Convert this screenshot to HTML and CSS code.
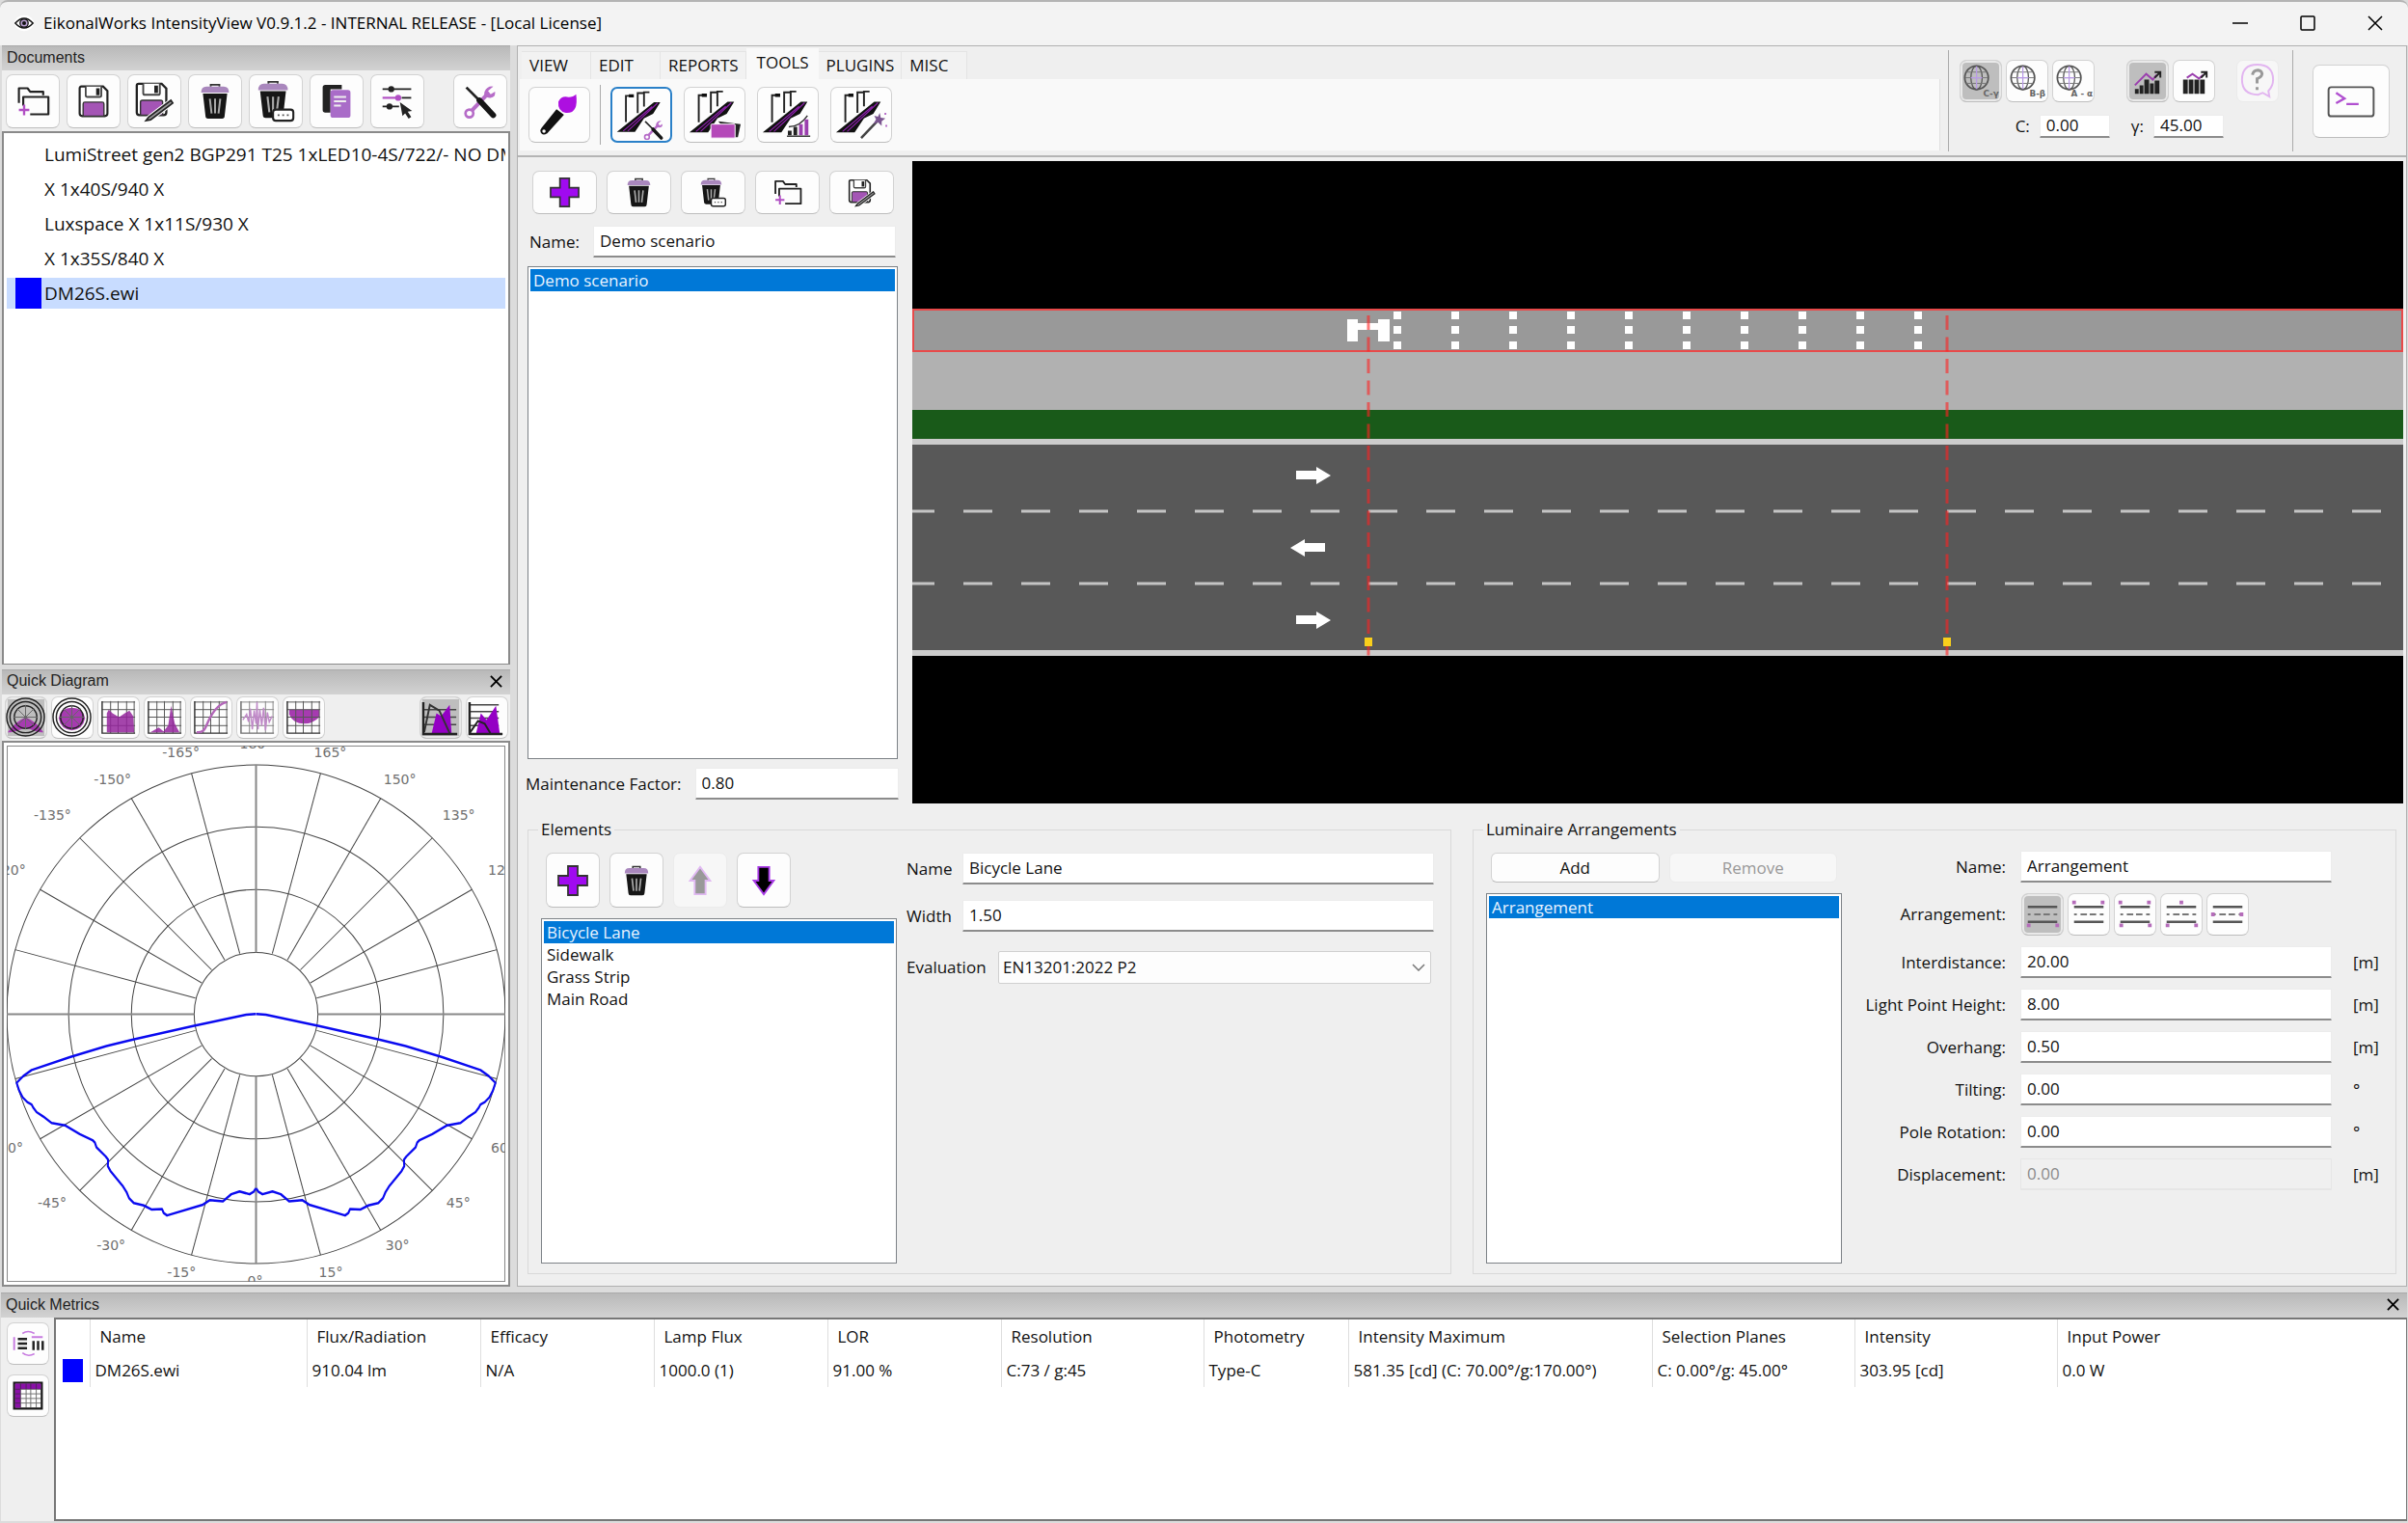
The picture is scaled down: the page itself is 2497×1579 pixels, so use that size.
FILE: index.html
```html
<!DOCTYPE html>
<html lang="en">
<head>
<meta charset="utf-8">
<title>EikonalWorks IntensityView</title>
<link rel="stylesheet" href="styles.css">
</head>
<body>
<svg class="sprite" aria-hidden="true">
  <symbol id="i-eye" viewBox="0 0 24 20"><ellipse cx="12" cy="10" rx="11" ry="9" fill="#fff"/><path d="M2 10Q12-1 22 10Q12 21 2 10Z" fill="none" stroke="#111" stroke-width="1.6"/><circle cx="12" cy="10" r="4.6" fill="#b9a0d0" stroke="#111" stroke-width="1.4"/><circle cx="12" cy="10" r="2.2" fill="#111"/></symbol>
  <symbol id="i-folder" viewBox="0 0 40 40"><path d="M4 22V5H14L17 9H32V13M9 25V15H38V35H17" fill="none" stroke="#222" stroke-width="2.4" stroke-linejoin="round"/><path d="M10 24V36M4 30H16" stroke="#b14fc4" stroke-width="2.6"/></symbol>
  <symbol id="i-save" viewBox="0 0 40 40"><path d="M6 3H31L36 8V34Q36 37 33 37H7Q4 37 4 34V5Q4 3 6 3Z" fill="#fff" stroke="#222" stroke-width="2.4"/><path d="M11 3V13Q11 15 13 15H27Q29 15 29 13V3" fill="#fff" stroke="#444" stroke-width="2"/><rect x="23" y="5" width="4" height="8" fill="#222"/><path d="M8 37V23Q8 21 10 21H30Q32 21 32 23V37Z" fill="#a455b5" stroke="#333" stroke-width="1.5"/></symbol>
  <symbol id="i-saveas" viewBox="0 0 46 44"><use href="#i-save" width="40" height="40"/><path d="M41 21L17 39L14 43L19 42L43 24Z" fill="#999" stroke="#fff" stroke-width="4"/><path d="M41 21L17 39L14 43L19 42L43 24Z" fill="#999" stroke="#222" stroke-width="1.8"/></symbol>
  <symbol id="i-trash" viewBox="0 0 40 42"><path d="M15 4V2H25V4" fill="none" stroke="#333" stroke-width="2"/><path d="M4 11Q4 4 10 4H30Q36 4 36 11Z" fill="#a987bd"/><path d="M6 12H34L31 38Q31 41 28 41H12Q9 41 9 38Z" fill="#161616"/><path d="M14 18L16 35M20 18V35M26 18L24 35" stroke="#aaa" stroke-width="2.2"/></symbol>
  <symbol id="i-trashmore" viewBox="0 0 46 46"><use href="#i-trash" width="40" height="42"/><rect x="20" y="32" width="22" height="12" rx="3" fill="#fff" stroke="#222" stroke-width="2.2"/><path d="M25 38H38" stroke="#555" stroke-width="2" stroke-dasharray="2 3"/></symbol>
  <symbol id="i-copy" viewBox="0 0 40 40"><path d="M7 1H26V6H13V33H7Q4 33 4 30V4Q4 1 7 1Z" fill="#222"/><rect x="13" y="7" width="23" height="32" rx="3" fill="#a96cc8"/><path d="M17 15H31M17 20H31M17 25H25" stroke="#eee" stroke-width="2"/></symbol>
  <symbol id="i-sliders" viewBox="0 0 40 40"><path d="M3 6H36M3 26H22" stroke="#222" stroke-width="2"/><path d="M3 16H22" stroke="#b14fc4" stroke-width="2.4"/><path d="M25 16H36" stroke="#222" stroke-width="2"/><circle cx="13" cy="6" r="3.5" fill="#222"/><circle cx="21" cy="16" r="3.5" fill="#b14fc4"/><circle cx="11" cy="26" r="3.5" fill="#222"/><path d="M23 21L37 31L32 32L36 38L33 40L29 34L26 37Z" fill="#222"/></symbol>
  <symbol id="i-tools" viewBox="0 0 40 40"><path d="M9 32L29 11" stroke="#b66cc8" stroke-width="4.5"/><circle cx="7.500" cy="34" r="4.500" fill="#fff" stroke="#b66cc8" stroke-width="3"/><path d="M35 3L29 8L32 12L37 9Q38 16 31 16Q23 16 25 9Q28 2 35 3Z" fill="#b66cc8"/><path d="M4 4L20 20" stroke="#222" stroke-width="3"/><path d="M19 19L35 36" stroke="#161616" stroke-width="6.500" stroke-linecap="round"/></symbol>
  <symbol id="i-brush" viewBox="0 0 64 58"><path d="M50 7Q53 28 39 27Q30 25 31 15Q34 8 42 10Q47 10 50 7Z" fill="#ad0fe0"/><path d="M29 23L37 29L19 49Q14 52 12 48Q11 45 13 43Z" fill="#111"/><circle cx="15.500" cy="46.500" r="1.800" fill="#fff"/></symbol>
  <symbol id="i-street" viewBox="0 0 64 58"><path d="M15 37V8H22M28 27V5H35M35 20V4H41" fill="none" stroke="#222" stroke-width="2"/><path d="M19 7H23V9H19Z" stroke="#111" stroke-width="1.500"/><path d="M5 48L46 15H53L45 28L35 33L25 48Z" fill="#111"/><path d="M17 47L50 16M12 47L44 20" stroke="#8a1fa8" stroke-width="1.300"/></symbol>
  <symbol id="i-sttools" viewBox="0 0 64 58"><use href="#i-street"/><use href="#i-tools" x="34" y="34" width="23" height="23"/></symbol>
  <symbol id="i-stcards" viewBox="0 0 64 58"><use href="#i-street"/><path d="M36 36L60 39L57 53H50Z" fill="#222"/><rect x="28" y="39" width="26" height="15" rx="1" fill="#b548b9" stroke="#fff"/></symbol>
  <symbol id="i-stchart" viewBox="0 0 64 58"><use href="#i-street"/><path d="M33 42Q45 42 53 30" fill="none" stroke="#333" stroke-width="1.500"/><path d="M32 46H36V51H32ZM38 42H42V51H38Z" fill="#222"/><path d="M44 39H48V51H44ZM50 34H54V51H50Z" fill="#9b3fae"/><path d="M31 52H56" stroke="#333" stroke-width="1.500"/></symbol>
  <symbol id="i-stwand" viewBox="0 0 64 58"><use href="#i-street"/><path d="M32 55L50 35" stroke="#fff" stroke-width="5"/><path d="M32 54L50 35" stroke="#444" stroke-width="2.600"/><path d="M52 27L53 32L58 33L54 36L54 41L50 37L45 39L48 34L46 30L50 31Z" fill="#7b5590"/><path d="M57 28H59M58 41H60" stroke="#b66cc8" stroke-width="2"/></symbol>
  <symbol id="i-plus" viewBox="0 0 32 32"><path d="M11 1H21V11H31V21H21V31H11V21H1V11H11Z" fill="#a00af0" stroke="#333" stroke-width="1.800"/></symbol>
  <symbol id="i-down" viewBox="0 0 26 34"><path d="M7 2H19V17H24L13 32L2 17H7Z" fill="#000" stroke="#a93be6" stroke-width="2"/></symbol>
  <symbol id="i-up" viewBox="0 0 26 34"><path d="M7 32H19V17H24L13 2L2 17H7Z" fill="#999" stroke="#e0b8f2" stroke-width="2"/></symbol>
  <symbol id="i-globe" viewBox="0 0 43 43"><g fill="none" stroke="#555" stroke-width="1.300"><circle cx="17" cy="18" r="12.500" stroke-width="1.800"/><ellipse cx="17" cy="18" rx="6" ry="12.500"/><path d="M6 12H28M5 18H29M6 24H28" stroke="#777" stroke-width="1"/><path d="M17 6V30M11 18H23" stroke="#b99be6"/></g></symbol>
  <symbol id="i-bars" viewBox="0 0 43 43"><path d="M8 30H12V35H8ZM13 26H17V35H13ZM18 20H23V35H18ZM24 24H28V35H24ZM29 21H34V35H29Z" fill="#222"/><path d="M8 26L20 14L27 20L31 15" fill="none" stroke="#9b3fae" stroke-width="2"/><path d="M29 18L34 13M29 12H35V18" fill="none" stroke="#222" stroke-width="2"/></symbol>
  <symbol id="i-bars2" viewBox="0 0 43 43"><path d="M10 20H15V35H10ZM16 20H21V35H16ZM22 20H27V35H22ZM28 20H33V35H28Z" fill="#222"/><path d="M14 18L20 14L27 19L31 15" fill="none" stroke="#9b3fae" stroke-width="2"/><path d="M29 18L34 13M29 12H35V18" fill="none" stroke="#222" stroke-width="2"/></symbol>
  <symbol id="i-help" viewBox="0 0 43 43"><path d="M33 32Q38 27 38 20Q38 4 21 4Q5 4 5 20Q5 36 22 36L27 34L34 38Z" fill="none" stroke="#e2b5f0" stroke-width="2"/><path d="M16 15Q17 10 22 10Q27 11 26 15Q25 18 21 19V24M21 28V31" fill="none" stroke="#999" stroke-width="3"/></symbol>
  <symbol id="i-term" viewBox="0 0 80 76"><rect x="16" y="23" width="48" height="31" rx="3" fill="none" stroke="#555" stroke-width="2"/><path d="M24 29L33 35L24 40M35 41H48" fill="none" stroke="#b04fd0" stroke-width="2.400"/></symbol>
  <symbol id="g-axes" viewBox="0 0 43 43"><path d="M4 5H39M4 13H39M4 21H39M4 30H39M13 4V38M21 4V38M30 4V38M38 4V38" stroke="#555"/><path d="M4 4V38H39" fill="none" stroke="#333" stroke-width="1.500"/></symbol>
  <symbol id="g-rings" viewBox="0 0 43 43"><g fill="none" stroke="#222" stroke-width="1.500"><circle cx="21" cy="21" r="20"/><circle cx="21" cy="21" r="16.500"/><circle cx="21" cy="21" r="12"/></g><path d="M21 8V34M8 21H34M12 12L30 30M30 12L12 30" stroke="#666"/></symbol>
  <symbol id="i-d1" viewBox="0 0 43 43"><path d="M2 2H41V41H2Z" fill="#bebebe"/><path d="M2 37Q10 26 21 21Q33 26 40 37Q35 38 21 32Q8 38 2 37Z" fill="#a63bb0"/><use href="#g-rings"/></symbol>
  <symbol id="i-d2" viewBox="0 0 43 43"><path d="M21 11Q33 11 35 22Q33 34 21 35Q9 34 7 22Q9 11 21 11Z" fill="#a63bb0"/><use href="#g-rings"/></symbol>
  <symbol id="i-d3" viewBox="0 0 43 43"><use href="#g-axes"/><path d="M9 37V17L11 13L15 17L22 21L28 17L33 14L37 20L38 37Z" fill="#94249c" opacity=".85"/></symbol>
  <symbol id="i-d4" viewBox="0 0 43 43"><use href="#g-axes"/><path d="M6 37L15 32L20 36L25 30L28 9L32 28L37 37Z" fill="#94249c" opacity=".85"/></symbol>
  <symbol id="i-d5" viewBox="0 0 43 43"><use href="#g-axes"/><path d="M6 37Q13 38 16 31Q25 8 38 5" fill="none" stroke="#b266b8" stroke-width="2.500"/></symbol>
  <symbol id="i-d6" viewBox="0 0 43 43"><use href="#g-axes" opacity=".7"/><path d="M6 24L10 18L12 26L14 12L16 34L18 14L20 28L21 5L22 34L24 13L26 30L28 11L30 35L32 16L34 26L37 20" fill="none" stroke="#c08ac8" stroke-width="1.500"/></symbol>
  <symbol id="i-d7" viewBox="0 0 43 43"><path d="M6 13H38V21Q31 28 22 28Q10 28 6 18Z" fill="#a63bb0"/><use href="#g-axes"/></symbol>
  <symbol id="i-d8" viewBox="0 0 43 43"><path d="M2 2H41V41H2Z" fill="#bebebe"/><path d="M3 13H38M3 21H38M3 29H38" stroke="#444" stroke-width="1.500"/><path d="M12 38L17 17L22 20L31 8L33 38Z" fill="#9400c4"/><path d="M4 37L10 8L20 14L31 38" fill="none" stroke="#333" stroke-width="2"/><path d="M3 5V39H39" fill="none" stroke="#222" stroke-width="2.500"/></symbol>
  <symbol id="i-d9" viewBox="0 0 43 43"><path d="M3 8H34M3 15H34M3 22H34M3 30H34" stroke="#444" stroke-width="1.500"/><path d="M10 38L15 17L21 24L31 9L35 38Z" fill="#9400c4"/><path d="M3 38L12 25L19 28L25 38" fill="none" stroke="#222" stroke-width="2"/><path d="M3 5V39H38" fill="none" stroke="#222" stroke-width="2.500"/></symbol>
  <symbol id="i-swap" viewBox="0 0 44 44"><path d="M11 17H21M11 22H21M11 27H21M28 19V29M33 19V29M38 19V29" stroke="#222" stroke-width="2.600"/><path d="M7 15V29M26 15H38" stroke="#c77be0" stroke-width="2"/><path d="M16 11Q22 7 29 11M29 33Q22 37 16 32" fill="none" stroke="#c77be0" stroke-width="1.600"/></symbol>
  <symbol id="i-grid" viewBox="0 0 44 44"><path d="M7 8H37V36H7Z" fill="#fff" stroke="#1a1a1a" stroke-width="2.400"/><path d="M8 9H36V15H14V35H8Z" fill="#8a0fa8"/><path d="M14 9V35M20 9V35M25 9V35M31 9V35M8 15H36M8 20H36M8 25H36M8 30H36" stroke="#333" stroke-width="1" opacity=".7"/></symbol>
  <symbol id="g-road" viewBox="0 0 44 44"><path d="M6 14H38M6 30H38" stroke="#555" stroke-width="2.600"/><path d="M6 22H38" stroke="#777" stroke-width="2" stroke-dasharray="3 4 7 3 7 4 4"/></symbol>
</svg>

<header class="titlebar">
  <svg class="app-icon"><use href="#i-eye"/></svg>
  <h1 class="app-title">EikonalWorks IntensityView V0.9.1.2 - INTERNAL RELEASE - [Local License]</h1>
  <div class="window-buttons">
    <button aria-label="Minimize"><svg viewBox="0 0 16 16"><path d="M0 8H16"/></svg></button>
    <button aria-label="Maximize"><svg viewBox="0 0 16 16"><rect x="1" y="1" width="14" height="14" rx="1"/></svg></button>
    <button aria-label="Close"><svg viewBox="0 0 16 16"><path d="M1 1L15 15M15 1L1 15"/></svg></button>
  </div>
</header>

<main class="workspace">
  <aside class="sidebar">
    <section class="dock documents">
      <h2 class="dock-title">Documents</h2>
      <div class="doc-tools">
        <button class="tool doc" aria-label="Open"><svg><use href="#i-folder"/></svg></button>
        <button class="tool doc" aria-label="Save"><svg><use href="#i-save"/></svg></button>
        <button class="tool doc" aria-label="Save as"><svg class="wide"><use href="#i-saveas"/></svg></button>
        <button class="tool doc" aria-label="Delete"><svg><use href="#i-trash"/></svg></button>
        <button class="tool doc" aria-label="Delete more"><svg class="wide"><use href="#i-trashmore"/></svg></button>
        <button class="tool doc" aria-label="Copy"><svg><use href="#i-copy"/></svg></button>
        <button class="tool doc" aria-label="Select properties"><svg><use href="#i-sliders"/></svg></button>
        <button class="tool doc last" aria-label="Settings"><svg><use href="#i-tools"/></svg></button>
      </div>
      <ul class="doc-list">
        <li>LumiStreet gen2 BGP291 T25 1xLED10-4S/722/- NO DMX</li>
        <li>X 1x40S/940 X</li>
        <li>Luxspace X 1x11S/930 X</li>
        <li>X 1x35S/840 X</li>
        <li class="current">DM26S.ewi</li>
      </ul>
    </section>

    <section class="dock">
      <h2 class="dock-title">Quick Diagram <button class="dock-close" aria-label="Close diagram"><svg viewBox="0 0 14 14"><path d="M1 1L13 13M13 1L1 13"/></svg></button></h2>
      <div class="diagram-tools">
        <button class="tool small" aria-label="Polar diagram" aria-pressed="true"><svg><use href="#i-d1"/></svg></button>
        <button class="tool small" aria-label="Cone diagram"><svg><use href="#i-d2"/></svg></button>
        <button class="tool small" aria-label="Linear diagram"><svg><use href="#i-d3"/></svg></button>
        <button class="tool small" aria-label="Peak diagram"><svg><use href="#i-d4"/></svg></button>
        <button class="tool small" aria-label="Cumulative diagram"><svg><use href="#i-d5"/></svg></button>
        <button class="tool small" aria-label="Noise diagram"><svg><use href="#i-d6"/></svg></button>
        <button class="tool small" aria-label="Area diagram"><svg><use href="#i-d7"/></svg></button>
        <button class="tool small last" aria-label="Normalised" aria-pressed="true"><svg><use href="#i-d8"/></svg></button>
        <button class="tool small" aria-label="Absolute"><svg><use href="#i-d9"/></svg></button>
      </div>
      <div class="diagram-box">
        <svg class="polar" viewBox="0 0 516 555" role="img" aria-label="Polar intensity diagram">
          <defs>
            <line id="spoke" x1="258" y1="343" x2="258" y2="536"/>
            <path id="half" d="M769 882L740 884L580 912L400 946L320 962L210 990L95 1022L70 1037L50 1054L58 1074L68 1090L82 1102L95 1108L100 1116L110 1127L130 1138L155 1154L195 1160L240 1182L278 1197L285 1203L290 1215L318 1238L325 1246L324 1262L332 1274L370 1313L380 1326L388 1342L402 1354L432 1360L455 1370L487 1369L492 1379L502 1385L610 1358L630 1347L670 1350L695 1332L720 1325L750 1332L762 1326L769 1317"/>
          </defs>
          <rect class="frame" x="0" y="0" width="516" height="555"/>
          <g class="rings"><circle cx="258" cy="278" r="64"/><circle cx="258" cy="278" r="129"/><circle cx="258" cy="278" r="194"/><circle cx="258" cy="278" r="258"/></g>
          <g class="axis"><path d="M258 20V214M258 342V536M0 278H194M322 278H516"/></g>
          <g class="rings">
            <use href="#spoke" transform="rotate(15 258 278)"/><use href="#spoke" transform="rotate(30 258 278)"/><use href="#spoke" transform="rotate(45 258 278)"/><use href="#spoke" transform="rotate(60 258 278)"/><use href="#spoke" transform="rotate(75 258 278)"/>
            <use href="#spoke" transform="rotate(105 258 278)"/><use href="#spoke" transform="rotate(120 258 278)"/><use href="#spoke" transform="rotate(135 258 278)"/><use href="#spoke" transform="rotate(150 258 278)"/><use href="#spoke" transform="rotate(165 258 278)"/>
            <use href="#spoke" transform="rotate(195 258 278)"/><use href="#spoke" transform="rotate(210 258 278)"/><use href="#spoke" transform="rotate(225 258 278)"/><use href="#spoke" transform="rotate(240 258 278)"/><use href="#spoke" transform="rotate(255 258 278)"/>
            <use href="#spoke" transform="rotate(285 258 278)"/><use href="#spoke" transform="rotate(300 258 278)"/><use href="#spoke" transform="rotate(315 258 278)"/><use href="#spoke" transform="rotate(330 258 278)"/><use href="#spoke" transform="rotate(345 258 278)"/>
          </g>
          <g class="ticks">
            <text x="241" y="3">180°</text><text x="161" y="12">-165°</text><text x="318" y="12">165°</text>
            <text x="90" y="40">-150°</text><text x="390" y="40">150°</text>
            <text x="28" y="77">-135°</text><text x="451" y="77">135°</text>
            <text x="-19" y="134">-120°</text><text x="498" y="134">120°</text>
            <text x="-13" y="421">-60°</text><text x="501" y="421">60°</text>
            <text x="32" y="478">-45°</text><text x="455" y="478">45°</text>
            <text x="93" y="522">-30°</text><text x="392" y="522">30°</text>
            <text x="166" y="550">-15°</text><text x="323" y="550">15°</text><text x="249" y="559">0°</text>
          </g>
          <g class="curve">
            <use href="#half" transform="translate(-7 -88) scale(.3444 .4146)"/>
            <use href="#half" transform="translate(523 -88) scale(-.3444 .4146)"/>
          </g>
        </svg>
      </div>
    </section>
  </aside>

  <section class="center">
    <div class="ribbon">
      <div class="ribbon-tabs">
        <nav class="tabs">
          <button class="tab">VIEW</button><button class="tab">EDIT</button><button class="tab">REPORTS</button><button class="tab active">TOOLS</button><button class="tab">PLUGINS</button><button class="tab">MISC</button>
        </nav>
        <div class="tab-page">
          <button class="tool large" aria-label="Brush"><svg><use href="#i-brush"/></svg></button>
          <span class="divider"></span>
          <button class="tool large focus" aria-label="Street design"><svg><use href="#i-sttools"/></svg></button>
          <button class="tool large" aria-label="Street batch"><svg><use href="#i-stcards"/></svg></button>
          <button class="tool large" aria-label="Street results"><svg><use href="#i-stchart"/></svg></button>
          <button class="tool large" aria-label="Street wizard"><svg><use href="#i-stwand"/></svg></button>
        </div>
      </div>
      <div class="ribbon-planes">
        <div class="plane-buttons">
          <button class="tool small plane" aria-label="C gamma" aria-pressed="true"><svg viewBox="0 0 43 43"><use href="#i-globe"/><text x="24" y="38">C-γ</text></svg></button>
          <button class="tool small plane" aria-label="B beta"><svg viewBox="0 0 43 43"><use href="#i-globe"/><text x="24" y="38">B-β</text></svg></button>
          <button class="tool small plane" aria-label="A alpha"><svg viewBox="0 0 43 43"><use href="#i-globe"/><text x="19" y="38">A - α</text></svg></button>
          <button class="tool small gap-left" aria-label="Relative" aria-pressed="true"><svg><use href="#i-bars"/></svg></button>
          <button class="tool small" aria-label="Absolute values"><svg><use href="#i-bars2"/></svg></button>
          <button class="tool small help" aria-label="Help" disabled><svg><use href="#i-help"/></svg></button>
        </div>
        <div class="plane-values">
          <label for="c">C:</label><input id="c" value="0.00">
          <label for="gamma">γ:</label><input id="gamma" value="45.00">
        </div>
      </div>
      <div class="ribbon-console"><button class="tool console" aria-label="Console"><svg><use href="#i-term"/></svg></button></div>
    </div>

    <div class="scenario">
      <div class="scenario-side">
        <div class="scenario-tools">
          <button class="tool mid" aria-label="Add scenario"><svg><use href="#i-plus"/></svg></button>
          <button class="tool mid" aria-label="Delete scenario"><svg><use href="#i-trash"/></svg></button>
          <button class="tool mid" aria-label="Delete scenarios"><svg><use href="#i-trashmore"/></svg></button>
          <button class="tool mid" aria-label="Open scenario"><svg><use href="#i-folder"/></svg></button>
          <button class="tool mid" aria-label="Save scenario"><svg><use href="#i-saveas"/></svg></button>
        </div>
        <div class="line scenario-name"><label for="sname">Name:</label><input id="sname" value="Demo scenario"></div>
        <ul class="listbox"><li class="selected">Demo scenario</li></ul>
        <div class="line maintenance"><label for="mf">Maintenance Factor:</label><input id="mf" value="0.80"></div>
      </div>
      <svg class="street" viewBox="0 0 1546 666" preserveAspectRatio="xMidYMid slice" role="img" aria-label="Street layout">
        <rect width="1546" height="666" fill="#000"/>
        <rect y="154" width="1546" height="43" fill="#999"/>
        <rect y="197" width="1546" height="61" fill="#b1b1b1"/>
        <rect y="258" width="1546" height="30" fill="#195a19"/>
        <rect y="288" width="1546" height="225" fill="#ccc"/>
        <rect y="294" width="1546" height="213" fill="#585858"/>
        <rect x="1" y="154" width="1544" height="43" fill="none" stroke="#e84a4a" stroke-width="2"/>
        <path d="M-7 363H1546M-7 438H1546" stroke="#c4c4c4" stroke-width="3" stroke-dasharray="30 30"/>
        <path d="M499 160H1047M499 175H1047M499 191H1047" stroke="#fff" stroke-width="8" stroke-dasharray="8 52"/>
        <path d="M451 164H462V168H483V164H495V187H483V175H462V187H451Z" fill="#fff"/>
        <path d="M398 321H419V317L434 326L419 335V330H398ZM428 396H407V392L392 401L407 410V405H428ZM398 471H419V467L434 476L419 485V480H398Z" fill="#fff"/>
        <path d="M473 160V513M1073 160V513" stroke="#f22" stroke-opacity=".6" stroke-width="3" stroke-dasharray="15 7.5"/>
        <path d="M469 494H477V503H469ZM1069 494H1077V503H1069Z" fill="#f9cf1c"/>
      </svg>
    </div>

    <div class="editors">
      <fieldset class="group">
        <legend>Elements</legend>
        <div class="group-list">
          <div class="element-tools">
            <button class="tool square" aria-label="Add element"><svg><use href="#i-plus"/></svg></button>
            <button class="tool square" aria-label="Delete element"><svg><use href="#i-trash"/></svg></button>
            <button class="tool square" aria-label="Move up" disabled><svg><use href="#i-up"/></svg></button>
            <button class="tool square" aria-label="Move down"><svg><use href="#i-down"/></svg></button>
          </div>
          <ul class="listbox"><li class="selected">Bicycle Lane</li><li>Sidewalk</li><li>Grass Strip</li><li>Main Road</li></ul>
        </div>
        <div class="element-form">
          <div class="line"><label class="short" for="ename">Name</label><input id="ename" value="Bicycle Lane"></div>
          <div class="line"><label class="short" for="ewidth">Width</label><input id="ewidth" value="1.50"></div>
          <div class="line evaluation"><label for="eval">Evaluation</label>
            <span class="select-wrap"><select id="eval"><option>EN13201:2022 P2</option></select><svg viewBox="0 0 14 8"><path d="M1 1L7 7L13 1"/></svg></span></div>
        </div>
      </fieldset>

      <fieldset class="group">
        <legend>Luminaire Arrangements</legend>
        <div class="group-list">
          <div class="text-buttons"><button class="push">Add</button><button class="push" disabled>Remove</button></div>
          <ul class="listbox"><li class="selected">Arrangement</li></ul>
        </div>
        <div class="arr-form">
          <label for="aname">Name:</label><input id="aname" value="Arrangement"><span></span>
          <span class="lab">Arrangement:</span>
          <div class="arr-buttons">
            <button class="tool small" aria-label="Bottom side" aria-pressed="true"><svg viewBox="0 0 44 44"><use href="#g-road"/><path class="dots" d="M5 32H9V36H5ZM36 32H40V36H36Z"/></svg></button>
            <button class="tool small" aria-label="Top side"><svg viewBox="0 0 44 44"><use href="#g-road"/><path class="dots" d="M4 7H8V11H4ZM35 7H39V11H35Z"/></svg></button>
            <button class="tool small" aria-label="Opposite"><svg viewBox="0 0 44 44"><use href="#g-road"/><path class="dots" d="M4 7H8V11H4ZM35 7H39V11H35ZM5 32H9V36H5ZM36 32H40V36H36Z"/></svg></button>
            <button class="tool small" aria-label="Staggered"><svg viewBox="0 0 44 44"><use href="#g-road"/><path class="dots" d="M20 7H24V11H20ZM5 32H9V36H5ZM36 32H40V36H36Z"/></svg></button>
            <button class="tool small" aria-label="Median"><svg viewBox="0 0 44 44"><use href="#g-road"/><path class="dots" d="M4 20H8V24H4ZM35 20H39V24H35Z"/></svg></button>
          </div><span></span>
          <label for="inter">Interdistance:</label><input id="inter" value="20.00"><span>[m]</span>
          <label for="lph">Light Point Height:</label><input id="lph" value="8.00"><span>[m]</span>
          <label for="over">Overhang:</label><input id="over" value="0.50"><span>[m]</span>
          <label for="tilt">Tilting:</label><input id="tilt" value="0.00"><span>°</span>
          <label for="pole">Pole Rotation:</label><input id="pole" value="0.00"><span>°</span>
          <label for="disp">Displacement:</label><input id="disp" value="0.00" disabled><span>[m]</span>
        </div>
      </fieldset>
    </div>
  </section>
</main>

<section class="dock metrics">
  <h2 class="dock-title">Quick Metrics <button class="dock-close" aria-label="Close metrics"><svg viewBox="0 0 14 14"><path d="M1 1L13 13M13 1L1 13"/></svg></button></h2>
  <div class="metrics-body">
    <div class="metrics-tools">
      <button class="tool small" aria-label="Transpose"><svg><use href="#i-swap"/></svg></button>
      <button class="tool small" aria-label="Table"><svg><use href="#i-grid"/></svg></button>
    </div>
    <div class="metrics-view">
      <table>
        <colgroup><col class="w36"><col class="w225"><col class="w180"><col class="w180"><col class="w180"><col class="w180"><col class="w210"><col class="w150"><col class="w315"><col class="w210"><col class="w210"><col></colgroup>
        <thead><tr><th></th><th>Name</th><th>Flux/Radiation</th><th>Efficacy</th><th>Lamp Flux</th><th>LOR</th><th>Resolution</th><th>Photometry</th><th>Intensity Maximum</th><th>Selection Planes</th><th>Intensity</th><th>Input Power</th></tr></thead>
        <tbody><tr><td><span class="swatch"></span></td><td>DM26S.ewi</td><td>910.04 lm</td><td>N/A</td><td>1000.0 (1)</td><td>91.00 %</td><td>C:73 / g:45</td><td>Type-C</td><td>581.35 [cd] (C: 70.00°/g:170.00°)</td><td>C: 0.00°/g: 45.00°</td><td>303.95 [cd]</td><td>0.0 W</td></tr></tbody>
      </table>
    </div>
  </div>
</section>
</body>
</html>
```
FILE: styles.css
```css
* { box-sizing: border-box; }
body {
  margin: 0; min-height: 100vh; display: flex; flex-direction: column;
  background: #dcdcdc; color: #111;
  font: 17px/24px "Open Sans", sans-serif;
}
.sprite { position: absolute; width: 0; height: 0; }
button, input, select { font: inherit; color: inherit; margin: 0; }
h1, h2, ul { margin: 0; padding: 0; font-weight: normal; }
ul { list-style: none; }
svg { display: block; }

.titlebar {
  height: 47px; display: flex; align-items: center;
  background: #f3f3f3; border-top: 2px solid #b4b4b4;
  border-radius: 8px 8px 0 0; padding: 0 12px 2px 14px;
}
.app-icon { width: 22px; height: 20px; }
.app-title { font-size: 17px; margin-left: 9px; flex: 1; color: #000; }
.window-buttons { display: flex; gap: 38px; padding: 0 6px 0 0; }
.window-buttons button { border: 0; background: none; padding: 8px; }
.window-buttons svg { width: 16px; height: 16px; fill: none; stroke: #000; stroke-width: 1.5; }

.workspace {
  flex: 1; display: grid; grid-template-columns: 529px minmax(0, 1fr); gap: 7px;
  padding: 0 1px 6px 0;
}
.sidebar { display: flex; flex-direction: column; gap: 5px; padding-left: 2px; min-width: 0; }
.dock { background: #efefef; border-top: 1px solid #aaa; }
.documents { flex: 1; display: flex; flex-direction: column; }
.dock-title {
  height: 25px; display: flex; align-items: center; justify-content: space-between;
  padding: 0 8px 2px 5px; color: #222;
  background: linear-gradient(#b9b9b9, #d2d2d2);
  font: 16px/24px "Liberation Sans", sans-serif;
}
.dock-close { border: 0; background: none; padding: 0; }
.dock-close svg { width: 13px; height: 13px; stroke: #000; stroke-width: 2; fill: none; }

.tool {
  display: flex; align-items: center; justify-content: center; padding: 0;
  background: #fdfdfd; border: 1px solid #d2d2d2; border-bottom-color: #bdbdbd; border-radius: 7px;
}
.tool[aria-pressed="true"] { background: #bebebe; box-shadow: inset 0 0 0 2px #e9e9e9; }
.tool:disabled { background: #f7f7f7; border-color: #ebebeb; }
.tool.doc { width: 56px; height: 56px; }
.tool.doc svg { width: 36px; height: 38px; }
.tool.doc .wide { width: 44px; height: 44px; }
.tool.small { width: 44px; height: 44px; }
.tool.small svg { width: 42px; height: 42px; }
.tool.mid { width: 67px; height: 45px; }
.tool.mid svg { width: 31px; height: 31px; }
.tool.square { width: 56px; height: 57px; }
.tool.square svg { width: 32px; height: 32px; }
.tool.large { width: 64px; height: 58px; }
.tool.large svg { width: 62px; height: 56px; }
.tool.focus { border: 2px solid #2a80c8; }
.tool.console { width: 80px; height: 76px; }
.tool.console svg { width: 78px; height: 74px; }
.last { margin-left: auto; }

.doc-tools { display: flex; gap: 7px; padding: 4px 3px 3px 4px; }
.doc-list {
  flex: 1; background: #fff; border: 2px solid #8a8a8a; border-bottom-width: 1px;
  padding: 4px 3px; font-size: 19px; line-height: 36px;
}
.doc-list li { padding-left: 39px; white-space: nowrap; overflow: hidden; }
.doc-list .current {
  line-height: 32px; margin-top: 2px;
  background: linear-gradient(90deg, #c8dcff 9px, #00f 9px 36px, #c8dcff 36px);
}

.diagram-tools { display: flex; gap: 4px; padding: 2px 2px 2px 3px; }
.diagram-box { background: #fff; border: 2px solid #8a8a8a; padding: 3px; }
.polar { width: 100%; }
.polar .frame { fill: none; stroke: #888; stroke-width: 2; }
.rings { fill: none; stroke: #444; stroke-width: 1; }
.axis { stroke: #888; stroke-width: 2; }
.ticks { font: 14px "DejaVu Sans", sans-serif; fill: #707070; }
.curve { fill: none; stroke: #0a0af0; stroke-width: 6; stroke-linejoin: round; }

.center {
  background: #efefef; border: 1px solid #b0b0b0; min-width: 0;
  display: flex; flex-direction: column;
}
.ribbon { display: flex; border-bottom: 2px solid #b4b4b4; height: 115px; }
.ribbon-tabs { flex: 1; padding: 2px 0 5px 2px; display: flex; flex-direction: column; }
.tabs { display: flex; align-items: flex-end; height: 32px; padding-left: 2px; }
.tab {
  height: 29px; border: 1px solid #e4e4e4; border-width: 1px 1px 0 0;
  background: #f2f2f2; padding: 0 7px 0 8px; min-width: 72px; text-align: left;
  line-height: 24px;
}
.tab.active { height: 32px; background: #f9f9f9; border-color: #f9f9f9; padding: 0 9px 4px 11px; }
.tab:last-child { min-width: 68px; }
.tab-page {
  flex: 1; background: #f9f9f9; border-right: 1px solid #e0e0e0;
  display: flex; align-items: center; gap: 12px; padding: 0 9px;
}
.divider { width: 1px; height: 62px; background: #aaa; margin: 0 -2px; }
.ribbon-planes { margin: 4px 0 4px 8px; padding: 10px 14px 0 11px; border-left: 1px solid #aaa; width: 357px; }
.plane-buttons { display: flex; gap: 4px; }
.gap-left { margin-left: 29px; }
.help { margin-left: auto; }
.plane text { font: bold 9px "DejaVu Sans", sans-serif; fill: #666; }
.plane-values { display: flex; justify-content: flex-end; gap: 10px; padding: 13px 45px 0 0; }
.plane-values input { width: 73px; height: 24px; margin-right: 12px; }
.ribbon-console { border-left: 1px solid #aaa; margin: 4px 0; padding: 15px 17px 0 20px; }

input {
  height: 33px; min-width: 0; border: 1px solid #ececec; border-bottom: 2px solid #8c8c8c;
  background: #fff; padding: 0 6px 1px; border-radius: 1px;
}
input:disabled { background: #f0f0f0; border-color: #e6e6e6; color: #8a8a8a; }
.line { display: flex; align-items: center; }
.line input { flex: 1; }

.scenario { display: flex; gap: 14px; padding: 4px 3px 0 10px; }
.scenario-side { width: 385px; display: flex; flex-direction: column; padding-top: 10px; }
.scenario-tools { display: flex; justify-content: space-between; padding: 0 5px; }
.scenario-name { gap: 14px; padding: 12px 3px 9px 2px; }
.listbox {
  flex: 1; background: #fff; border: 1px solid #7d8287; padding: 2px;
  line-height: 23px;
}
.listbox li { padding: 0 3px; }
.listbox .selected { background: #0078d7; color: #e8f3ff; }
.scenario-side .listbox { margin-right: 1px; }
.maintenance { gap: 14px; padding: 9px 0 4px; margin-left: -2px; }
.street { flex: 1; min-width: 0; }

.editors { display: flex; gap: 22px; padding: 15px 10px 12px; flex: 1; }
.group {
  flex: 1; min-width: 0; margin: 0; border: 1px solid #d9d9d9;
  padding: 12px 12px 10px 13px; display: flex;
}
legend { padding: 0 3px; margin-left: -3px; }
.group-list { width: 369px; display: flex; flex-direction: column; gap: 11px; }
.element-tools { display: flex; gap: 10px; padding-left: 5px; }
.element-form { flex: 1; padding: 0 5px 0 10px; display: flex; flex-direction: column; gap: 16px; }
.short { width: 58px; }
.evaluation { padding: 4px 3px 0 0; }
.evaluation label { width: 95px; }
.select-wrap { flex: 1; display: grid; align-items: center; }
.select-wrap > * { grid-area: 1 / 1; }
.select-wrap svg { width: 14px; height: 8px; justify-self: end; margin-right: 6px; fill: none; stroke: #777; stroke-width: 1.5; pointer-events: none; }
select {
  appearance: none; height: 34px; background: #fdfdfd; border: 1px solid #d0d0d0;
  border-radius: 2px; padding: 0 4px; width: 100%;
}
.text-buttons { display: flex; gap: 10px; padding: 0 5px; }
.push {
  flex: 1; height: 31px; padding: 0; background: #fdfdfd; border: 1px solid #d2d2d2;
  border-bottom-color: #bdbdbd; border-radius: 6px;
}
.push:disabled { background: #f7f7f7; border-color: #ebebeb; color: #999; }
.arr-form {
  flex: 1; display: grid; grid-template-columns: 170px minmax(0, 1fr) 39px;
  column-gap: 15px; row-gap: 11px; align-items: center; align-content: start;
  margin-top: -2px;
}
.arr-form label, .lab { text-align: right; white-space: nowrap; }
.arr-form > :nth-child(3n) { padding-left: 7px; }
.arr-buttons { display: flex; gap: 4px; padding-left: 1px; }
.dots { fill: #b56cba; }

.metrics { margin: 0 1px 2px 1px; min-height: 237px; display: flex; flex-direction: column; }
.metrics-body { flex: 1; display: flex; }
.metrics-tools { width: 55px; padding: 5px 6px; display: flex; flex-direction: column; gap: 10px; }
.metrics-view { flex: 1; min-width: 0; background: #fff; border: 2px solid #777; border-width: 2px 1px 2px 2px; }
table { width: 100%; border-collapse: collapse; table-layout: fixed; }
th, td { padding: 0 0 0 5px; border-right: 1px solid #dedede; text-align: left; font-weight: normal; white-space: nowrap; height: 34px; }
th { padding-left: 10px; height: 36px; }
td:first-child { padding-left: 7px; }
th:last-child, td:last-child { border-right: 0; }
.swatch { display: block; width: 21px; height: 24px; background: #00f; }
.w36 { width: 35px; }
.w150 { width: 150px; }
.w180 { width: 180px; }
.w210 { width: 210px; }
.w225 { width: 225px; }
.w315 { width: 315px; }
```
